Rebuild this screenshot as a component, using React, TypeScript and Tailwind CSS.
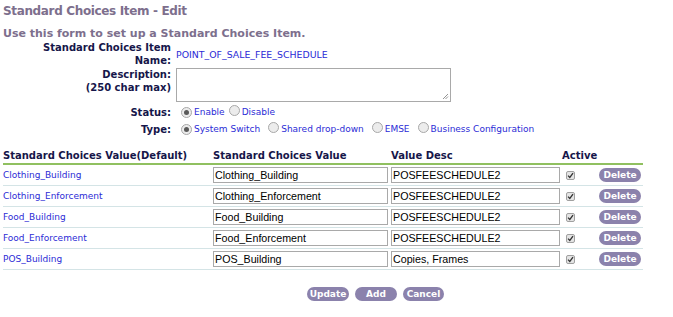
import React from "react";

const rows = [
  { def: "Clothing_Building", val: "Clothing_Building", desc: "POSFEESCHEDULE2" },
  { def: "Clothing_Enforcement", val: "Clothing_Enforcement", desc: "POSFEESCHEDULE2" },
  { def: "Food_Building", val: "Food_Building", desc: "POSFEESCHEDULE2" },
  { def: "Food_Enforcement", val: "Food_Enforcement", desc: "POSFEESCHEDULE2" },
  { def: "POS_Building", val: "POS_Building", desc: "Copies, Frames" },
];

function Radio({ checked }: { checked?: boolean }) {
  return (
    <span className="inline-flex w-[11px] h-[11px] rounded-full border border-[#a8a8a8] bg-[#ececec] items-center justify-center shrink-0">
      {checked && <span className="w-[5px] h-[5px] rounded-full bg-[#5a5a5a]" />}
    </span>
  );
}

function Check() {
  return (
    <span className="inline-flex w-[9px] h-[9px] rounded-[2px] border border-[#a0a0a0] bg-[#e4e4e4] items-center justify-center">
      <svg width="7" height="7" viewBox="0 0 7 7">
        <path d="M1 3.6 L2.8 5.4 L6 1.2" stroke="#333" strokeWidth="1.3" fill="none" />
      </svg>
    </span>
  );
}

function Btn({ children, w }: { children: React.ReactNode; w: string }) {
  return (
    <span
      className={`inline-flex h-[14px] ${w} rounded-[7px] bg-[#8b82ac] text-white font-bold text-[9px] items-center justify-center leading-none`}
    >
      {children}
    </span>
  );
}

const arial = { fontFamily: '"Liberation Sans", Arial, sans-serif' };

export default function App() {
  return (
    <div
      className="w-[673px] h-[317px] bg-white text-[10px] leading-[13px] overflow-hidden"
      style={{ fontFamily: '"DejaVu Sans", Verdana, sans-serif' }}
    >
      <div className="pl-[3px] pt-[4px]">
        <div className="text-[12px] leading-[15px] font-bold text-[#7d6f8d] tracking-[-0.35px]">
          Standard Choices Item - Edit
        </div>
        <div className="mt-[8px] text-[11px] font-bold text-[#7d6f8d] leading-[13px]">
          Use this form to set up a Standard Choices Item.
        </div>

        {/* Name */}
        <div className="flex items-center mt-[1px]">
          <div className="w-[168px] text-right font-bold text-[#16164a] leading-[13px]">
            Standard Choices Item
            <br />
            Name:
          </div>
          <div className="ml-[5px] text-[9.4px] text-[#2b2bd6]">POINT_OF_SALE_FEE_SCHEDULE</div>
        </div>

        {/* Description */}
        <div className="flex items-center mt-[1px]">
          <div className="w-[168px] text-right font-bold text-[#16164a] leading-[13px] pb-[8px]">
            Description:
            <br />
            (250 char max)
          </div>
          <div className="ml-[5px] w-[275px] h-[34px] border border-[#a9a9a9] bg-white relative">
            <svg className="absolute right-[1px] bottom-[1px]" width="7" height="7" viewBox="0 0 7 7">
              <path d="M6 1 L1 6 M6 3.5 L3.5 6" stroke="#888" strokeWidth="0.9" />
            </svg>
          </div>
        </div>

        {/* Status */}
        <div className="flex items-center mt-[3px] h-[14px]">
          <div className="w-[168px] text-right font-bold text-[#16164a]">Status:</div>
          <div className="ml-[10px] flex items-center text-[#2b2bd6] text-[9px]">
            <Radio checked />
            <span className="ml-[2px]">Enable</span>
            <span className="ml-[4px]"><Radio /></span>
            <span className="ml-[2px]">Disable</span>
          </div>
        </div>

        {/* Type */}
        <div className="flex items-center mt-[3px] h-[14px]">
          <div className="w-[168px] text-right font-bold text-[#16164a]">Type:</div>
          <div className="ml-[10px] flex items-center text-[#2b2bd6] text-[9px]">
            <Radio checked />
            <span className="ml-[2px]">System Switch</span>
            <span className="ml-[8px]"><Radio /></span>
            <span className="ml-[2px]">Shared drop-down</span>
            <span className="ml-[8px]"><Radio /></span>
            <span className="ml-[2px]">EMSE</span>
            <span className="ml-[8px]"><Radio /></span>
            <span className="ml-[2px]">Business Configuration</span>
          </div>
        </div>

        {/* Table */}
        <div className="w-[640px] mt-[13px]">
          <div className="grid grid-cols-[210px_178px_171px_37px_44px] font-bold text-[#16164a] h-[16px] items-center border-b-2 border-[#90c060] pb-[1px]">
            <div>Standard Choices Value(Default)</div>
            <div>Standard Choices Value</div>
            <div>Value Desc</div>
            <div className="col-span-2">Active</div>
          </div>
          {rows.map((r) => (
            <div
              key={r.def}
              className="grid grid-cols-[210px_178px_171px_37px_44px] h-[21px] items-center border-b border-[#d4e4e6]"
            >
              <div className="text-[9px] text-[#2b2bd6]">{r.def}</div>
              <div>
                <div
                  className="w-[175px] h-[16px] border border-[#a9a9a9] text-[10.7px] leading-[14px] pl-[1px] text-black"
                  style={arial}
                >
                  {r.val}
                </div>
              </div>
              <div>
                <div
                  className="w-[169px] h-[16px] border border-[#a9a9a9] text-[10.7px] leading-[14px] pl-[1px] text-black"
                  style={arial}
                >
                  {r.desc}
                </div>
              </div>
              <div className="pl-[4px] flex items-center">
                <Check />
              </div>
              <div>
                <Btn w="w-[42px]">Delete</Btn>
              </div>
            </div>
          ))}
        </div>

        <div className="flex justify-center w-[745px] gap-[6px] mt-[17px]">
          <Btn w="w-[42px]">Update</Btn>
          <Btn w="w-[42px]">Add</Btn>
          <Btn w="w-[41px]">Cancel</Btn>
        </div>
      </div>
    </div>
  );
}
